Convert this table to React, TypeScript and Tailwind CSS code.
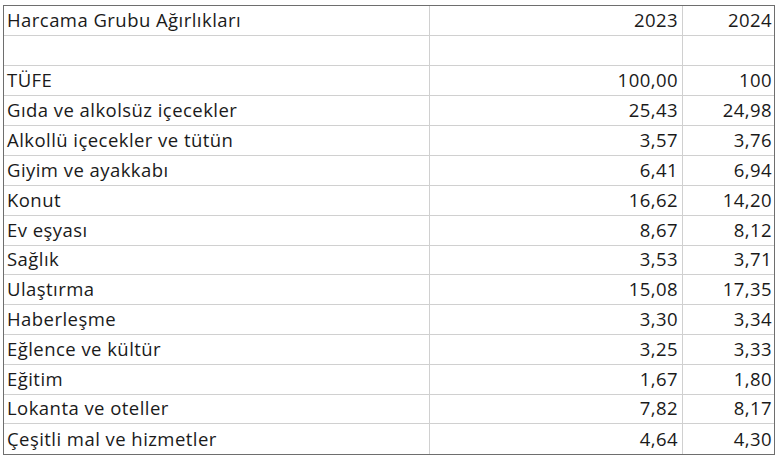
const rows: [string, string, string][] = [
  ['Harcama Grubu Ağırlıkları', '2023', '2024'],
  ['', '', ''],
  ['TÜFE', '100,00', '100'],
  ['Gıda ve alkolsüz içecekler', '25,43', '24,98'],
  ['Alkollü içecekler ve tütün', '3,57', '3,76'],
  ['Giyim ve ayakkabı', '6,41', '6,94'],
  ['Konut', '16,62', '14,20'],
  ['Ev eşyası', '8,67', '8,12'],
  ['Sağlık', '3,53', '3,71'],
  ['Ulaştırma', '15,08', '17,35'],
  ['Haberleşme', '3,30', '3,34'],
  ['Eğlence ve kültür', '3,25', '3,33'],
  ['Eğitim', '1,67', '1,80'],
  ['Lokanta ve oteller', '7,82', '8,17'],
  ['Çeşitli mal ve hizmetler', '4,64', '4,30'],
]

export default function App() {
  return (
    <div className="w-[781px] h-[457px] bg-white overflow-hidden pt-[5px] pl-[3px]">
      <div
        className="w-[772px] border border-[#6e6e6e] text-[18.5px] tracking-[0.45px] text-[#1a1a1a]"
        style={{ fontFamily: '"Open Sans", Lato, sans-serif' }}
      >
        {rows.map(([label, a, b], i) => {
          const last = i === rows.length - 1
          const h = i === 7 || i === 12 ? 'h-[29px]' : 'h-[30px]'
          const line = last ? '' : 'border-b border-[#d0d0d0]'
          return (
            <div key={i} className={`grid grid-cols-[426px_253px_91px] ${h}`}>
              <div className={`flex items-end pb-[1px] pl-[3px] border-r border-[#d0d0d0] ${line}`}>{label}</div>
              <div className={`flex items-end justify-end pb-[1px] pr-[4px] border-r border-[#d0d0d0] ${line}`}>{a}</div>
              <div className={`flex items-end justify-end pb-[1px] pr-[2px] ${line}`}>{b}</div>
            </div>
          )
        })}
      </div>
    </div>
  )
}
